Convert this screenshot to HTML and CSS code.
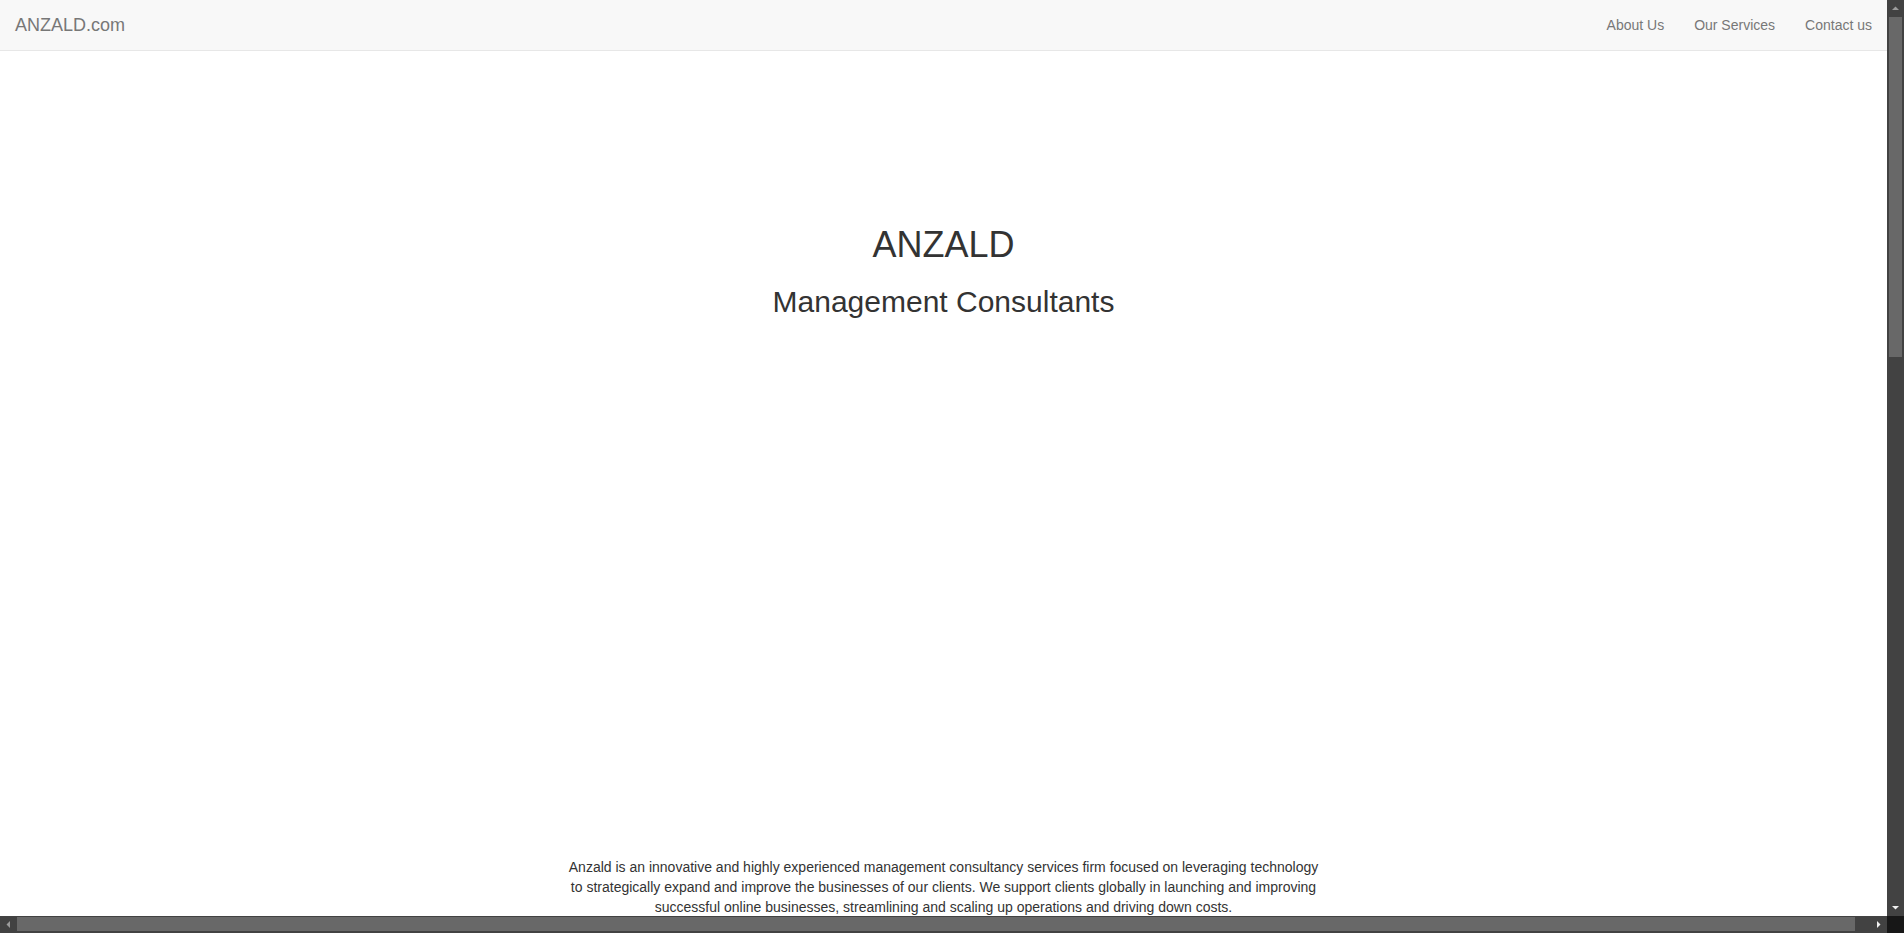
FILE: index.html
```html
<!DOCTYPE html>
<html lang="en">
<head>
<meta charset="utf-8">
<title>ANZALD.com</title>
<link rel="stylesheet" href="styles.css">
</head>
<body>
<div class="viewport">
  <nav class="navbar">
    <a class="brand" href="#">ANZALD.com</a>
    <ul class="nav-links">
      <li><a href="#about">About Us</a></li>
      <li><a href="#services">Our Services</a></li>
      <li><a href="#contact">Contact us</a></li>
    </ul>
  </nav>
  <header class="hero">
    <h1>ANZALD</h1>
    <h2>Management Consultants</h2>
  </header>
  <section class="about" id="about">
    <p class="intro">Anzald is an innovative and highly experienced management consultancy services firm focused on leveraging technology to strategically expand and improve the businesses of our clients. We support clients globally in launching and improving successful online businesses, streamlining and scaling up operations and driving down costs.</p>
  </section>
  <section class="services" id="services"></section>
</div>
<div class="vscroll" aria-hidden="true">
  <div class="sb-btn"><svg width="17" height="17" viewBox="0 0 17 17"><polygon points="5,10 12,10 8.5,6.5" fill="#9c9c9c"/></svg></div>
  <div class="sb-thumb-v"></div>
  <div class="sb-track"></div>
  <div class="sb-btn"><svg width="17" height="17" viewBox="0 0 17 17"><polygon points="5,7 12,7 8.5,10.5" fill="#f0f0f0"/></svg></div>
</div>
<div class="hscroll" aria-hidden="true">
  <div class="sb-btn"><svg width="17" height="17" viewBox="0 0 17 17"><polygon points="10,5 10,12 6.5,8.5" fill="#9c9c9c"/></svg></div>
  <div class="sb-thumb-h"></div>
  <div class="sb-track"></div>
  <div class="sb-btn"><svg width="17" height="17" viewBox="0 0 17 17"><polygon points="7,5 7,12 10.5,8.5" fill="#f0f0f0"/></svg></div>
</div>
<div class="corner"></div>
</body>
</html>
```
FILE: styles.css
```css
html, body {
  margin: 0;
  padding: 0;
}
body {
  display: grid;
  grid-template-columns: 1fr 17px;
  grid-template-rows: 1fr 17px;
  height: 100vh;
  overflow: hidden;
  font-family: "Liberation Sans", Arial, Helvetica, sans-serif;
  font-size: 14px;
  line-height: 20px;
  color: #333;
  background: #fff;
}
.viewport {
  min-width: 0;
  min-height: 0;
  overflow: hidden;
}
.navbar {
  display: flex;
  justify-content: space-between;
  align-items: stretch;
  height: 50px;
  background: #f8f8f8;
  border-bottom: 1px solid #e7e7e7;
}
.brand {
  padding: 15px;
  font-size: 18px;
  line-height: 20px;
  color: #777;
  text-decoration: none;
}
.nav-links {
  display: flex;
  list-style: none;
  margin: 0;
  padding: 0;
}
.nav-links a {
  display: block;
  padding: 15px;
  line-height: 20px;
  color: #777;
  text-decoration: none;
}
.hero {
  text-align: center;
  padding: 174px 0 539px;
}
.hero h1 {
  margin: 0;
  font-size: 36px;
  line-height: 1.1;
  font-weight: 400;
  color: #333;
}
.hero h2 {
  margin: 20px 0 0;
  font-size: 30px;
  line-height: 1.1;
  font-weight: 400;
  color: #333;
}
.about {
  display: flex;
  justify-content: center;
}
.intro {
  width: 750px;
  margin: 0;
  text-align: center;
}
.services {
  height: 1459px;
}

/* drawn window scrollbars */
.vscroll {
  display: flex;
  flex-direction: column;
  background: #424242;
}
.hscroll {
  display: flex;
  flex-direction: row;
  background: #424242;
}
.sb-btn {
  width: 17px;
  height: 17px;
  flex: none;
}
.sb-btn svg {
  display: block;
}
.sb-track {
  flex: 1;
}
.sb-thumb-v {
  flex: none;
  height: 340px;
  margin: 0 2px;
  background: #686868;
}
.sb-thumb-h {
  flex: none;
  width: 1838px;
  margin: 1px 0 2px;
  background: #686868;
}
.corner {
  background: #171717;
}
```
